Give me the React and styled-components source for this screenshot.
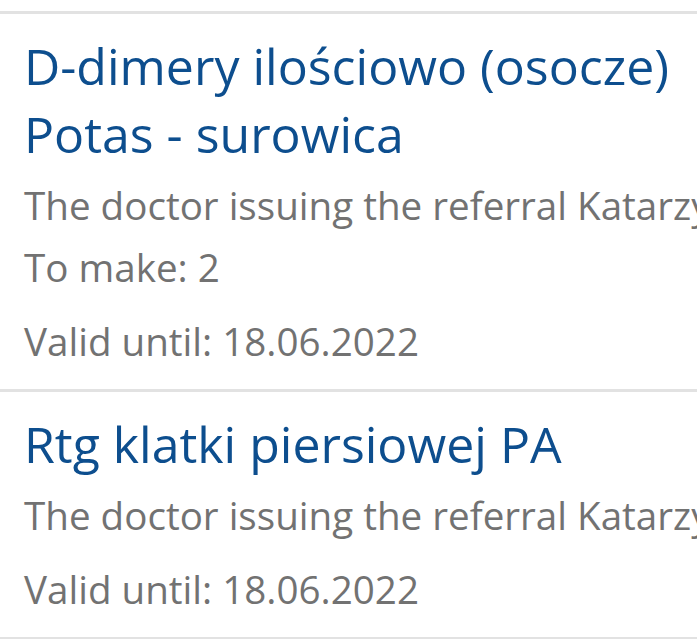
import React from "react";
import styled, { createGlobalStyle } from "styled-components";

const Global = createGlobalStyle`
  html, body { margin: 0; padding: 0; background: #ffffff; }
  body { font-family: "Open Sans", "Noto Sans", sans-serif; overflow: hidden; }
`;

const Page = styled.div`
  padding-top: 11px;
  width: 697px;
  overflow: hidden;
`;

const List = styled.ul`
  list-style: none;
  margin: 0;
  padding: 0;
  border-bottom: 3px solid #e2e2e2;
`;

const Card = styled.li`
  border-top: 3px solid #e2e2e2;
  padding: 18px 0 17px 24px;
  white-space: nowrap;
  overflow: hidden;
`;

const Title = styled.div`
  color: #0d4e8e;
  font-size: 50px;
  line-height: 68px;
`;

const Details = styled.div`
  margin-top: 6px;
  display: flex;
  flex-direction: column;
`;

const Meta = styled.div`
  color: #727272;
  font-size: 38.6px;
  line-height: 62px;
`;

const ValidRow = styled(Meta)`
  margin-top: 12px;
`;

const referrals = [
  {
    titles: ["D-dimery ilościowo (osocze)", "Potas - surowica"],
    doctor: "Katarzyna Nowak",
    toMake: 2,
    valid: "18.06.2022",
  },
  {
    titles: ["Rtg klatki piersiowej PA"],
    doctor: "Katarzyna Nowak",
    valid: "18.06.2022",
  },
];

export default function App() {
  return (
    <Page>
      <Global />
      <List>
        {referrals.map((r, i) => (
          <Card key={i}>
            {r.titles.map((t) => (
              <Title key={t}>{t}</Title>
            ))}
            <Details>
              <Meta>The doctor issuing the referral {r.doctor}</Meta>
              {r.toMake != null && <Meta>To make: {r.toMake}</Meta>}
              <ValidRow>Valid until: {r.valid}</ValidRow>
            </Details>
          </Card>
        ))}
      </List>
    </Page>
  );
}
